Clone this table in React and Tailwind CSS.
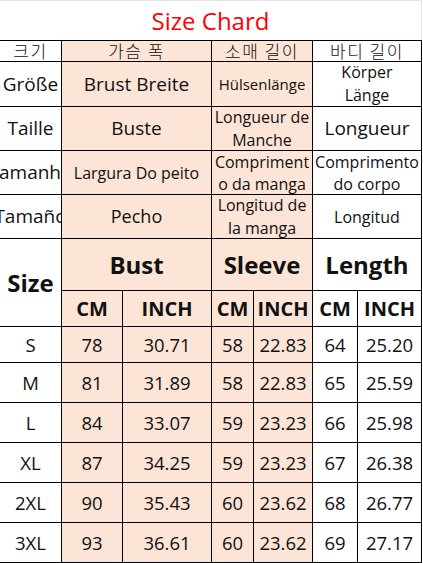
import React from "react";

const P = "bg-[#fce4d6]";
const W = "bg-white";

function C({ bg = W, className = "", children, span = "" }) {
  return (
    <div
      className={`${bg} ${span} flex items-center justify-center overflow-hidden text-center text-[#111] ${className}`}
    >
      {children}
    </div>
  );
}

const rows = [
  ["S", "78", "30.71", "58", "22.83", "64", "25.20"],
  ["M", "81", "31.89", "58", "22.83", "65", "25.59"],
  ["L", "84", "33.07", "59", "23.23", "66", "25.98"],
  ["XL", "87", "34.25", "59", "23.23", "67", "26.38"],
  ["2XL", "90", "35.43", "60", "23.62", "68", "26.77"],
  ["3XL", "93", "36.61", "60", "23.62", "69", "27.17"],
];

export default function App() {
  const kr = "font-['Noto_Sans_CJK_KR',sans-serif] text-[17px] font-light leading-[20px] tracking-[1.5px] whitespace-nowrap";
  return (
    <div className="w-[423px] h-[563px] bg-white font-['Open_Sans',sans-serif] overflow-hidden">
      <div className="h-10 w-[422px] flex items-center justify-center border-t border-r border-[#e4e4e4]">
        <span className="text-[24px] text-[#ff0000] leading-none">Size Chard</span>
      </div>
      <div className="w-[422px] bg-black pt-px pb-px pr-px">
        <div className="grid grid-cols-[61px_60px_88px_41px_58px_44px_63px] grid-rows-[20px_44px_43px_43px_43px_51px_35px_35px_39px_39px_39px_39px_39px] gap-px">
          {/* Korean row */}
          <C className={kr}>크기</C>
          <C bg={P} span="col-span-2" className={kr}>가슴 폭</C>
          <C bg={P} span="col-span-2" className={kr}>소매 길이</C>
          <C span="col-span-2" className={kr}>바디 길이</C>

          {/* German */}
          <C className="text-[19px] whitespace-nowrap">Größe</C>
          <C bg={P} span="col-span-2" className="text-[19px] whitespace-nowrap">Brust Breite</C>
          <C bg={P} span="col-span-2" className="text-[15px] whitespace-nowrap">Hülsenlänge</C>
          <C span="col-span-2" className="text-[16px] leading-[23px]">Körper<br />Länge</C>

          {/* French */}
          <C className="text-[19px] whitespace-nowrap">Taille</C>
          <C bg={P} span="col-span-2" className="text-[19px] whitespace-nowrap">Buste</C>
          <C bg={P} span="col-span-2" className="text-[16px] leading-[23px] whitespace-nowrap">Longueur de<br />Manche</C>
          <C span="col-span-2" className="text-[19px] whitespace-nowrap">Longueur</C>

          {/* Portuguese */}
          <C className="text-[19px] whitespace-nowrap">Tamanho</C>
          <C bg={P} span="col-span-2" className="text-[16px] whitespace-nowrap">Largura Do peito</C>
          <C bg={P} span="col-span-2" className="text-[16px] leading-[22px] whitespace-nowrap">Compriment<br />o da manga</C>
          <C span="col-span-2" className="text-[16px] leading-[22px] whitespace-nowrap">Comprimento<br />do corpo</C>

          {/* Spanish */}
          <C className="text-[19px] whitespace-nowrap">Tamaño</C>
          <C bg={P} span="col-span-2" className="text-[18px] whitespace-nowrap">Pecho</C>
          <C bg={P} span="col-span-2" className="text-[16px] leading-[23px] whitespace-nowrap">Longitud de<br />la manga</C>
          <C span="col-span-2" className="text-[16px] whitespace-nowrap">Longitud</C>

          {/* Header */}
          <C span="row-span-2" className="text-[24px] font-bold">Size</C>
          <C bg={P} span="col-span-2" className="text-[24px] font-bold">Bust</C>
          <C bg={P} span="col-span-2" className="text-[24px] font-bold">Sleeve</C>
          <C span="col-span-2" className="text-[24px] font-bold">Length</C>

          <C bg={P} className="text-[20px] font-bold">CM</C>
          <C bg={P} className="text-[20px] font-bold">INCH</C>
          <C bg={P} className="text-[20px] font-bold">CM</C>
          <C bg={P} className="text-[20px] font-bold">INCH</C>
          <C className="text-[20px] font-bold">CM</C>
          <C className="text-[20px] font-bold">INCH</C>

          {rows.map((r) => (
            <React.Fragment key={r[0]}>
              {r.map((v, i) => (
                <C
                  key={i}
                  bg={i >= 1 && i <= 4 ? P : W}
                  className="text-[18.5px] whitespace-nowrap"
                >
                  {v}
                </C>
              ))}
            </React.Fragment>
          ))}
        </div>
      </div>
    </div>
  );
}
